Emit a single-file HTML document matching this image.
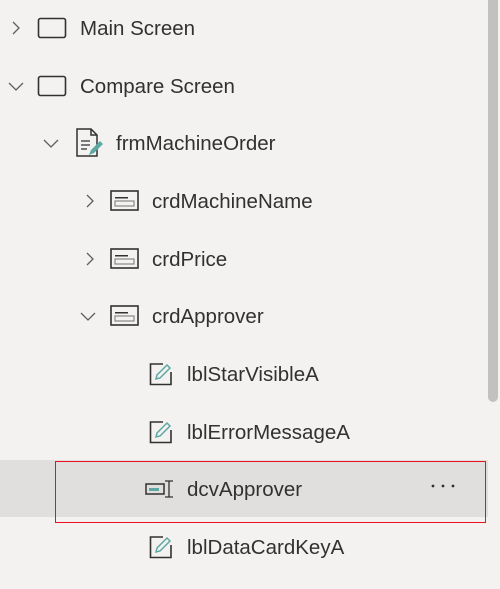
<!DOCTYPE html>
<html><head><style>
*{margin:0;padding:0;box-sizing:border-box}
body{width:500px;height:589px;background:#f3f2f1;position:relative;overflow:hidden;font-family:"Liberation Sans",sans-serif;color:#323130}
.t{position:absolute;font-size:20.5px;line-height:58px;top:0}
svg{position:absolute}
</style></head><body>
<div style="position:absolute;left:0;top:460px;width:488px;height:57px;background:#e1dfdd"></div>
<div style="position:absolute;left:55px;top:461px;width:431px;height:62px;border:1px solid #e81123;z-index:5"></div>
<div style="position:absolute;left:488px;top:0;width:10px;height:402px;background:#c2c1c0;border-radius:0 0 5px 5px"></div>

<svg style="left:10px;top:20px" width="12" height="16"><path d="M3 2l6 6-6 6" fill="none" stroke="#605e5c" stroke-width="1.3"/></svg>
<svg style="left:37px;top:17px" width="30" height="22"><rect x="1.5" y="1.5" width="27" height="19" rx="2" fill="none" stroke="#323130" stroke-width="1.6"/></svg>
<div class="t" style="left:80px;top:0px">Main Screen</div>

<svg style="left:7px;top:80px" width="18" height="12"><path d="M2 3l7 7 7-7" fill="none" stroke="#605e5c" stroke-width="1.3"/></svg>
<svg style="left:37px;top:75px" width="30" height="22"><rect x="1.5" y="1.5" width="27" height="19" rx="2" fill="none" stroke="#323130" stroke-width="1.6"/></svg>
<div class="t" style="left:80px;top:58px">Compare Screen</div>

<svg style="left:42px;top:137px" width="18" height="12"><path d="M2 3l7 7 7-7" fill="none" stroke="#605e5c" stroke-width="1.3"/></svg>
<svg style="left:75px;top:128px" width="30" height="30"><path d="M2 1h14l6 6v21H2z M16 1v6h6" fill="none" stroke="#323130" stroke-width="1.5"/><path d="M6 13h9M6 17h9M6 21h6" stroke="#323130" stroke-width="1.3"/><path d="M14 27l2-5 9-9 3 3-9 9z" fill="#5ea8a3"/></svg>
<div class="t" style="left:116px;top:115px">frmMachineOrder</div>

<svg style="left:84px;top:193px" width="12" height="16"><path d="M3 2l6 6-6 6" fill="none" stroke="#605e5c" stroke-width="1.3"/></svg>
<svg style="left:110px;top:190px" width="30" height="22"><rect x="1" y="1" width="27" height="19" fill="none" stroke="#323130" stroke-width="1.6"/><rect x="5" y="7" width="13" height="1.5" fill="#323130"/><rect x="5" y="11" width="19" height="5" fill="none" stroke="#8a8886" stroke-width="1.2"/></svg>
<div class="t" style="left:152px;top:173px">crdMachineName</div>
<svg style="left:84px;top:251px" width="12" height="16"><path d="M3 2l6 6-6 6" fill="none" stroke="#605e5c" stroke-width="1.3"/></svg>
<svg style="left:110px;top:248px" width="30" height="22"><rect x="1" y="1" width="27" height="19" fill="none" stroke="#323130" stroke-width="1.6"/><rect x="5" y="7" width="13" height="1.5" fill="#323130"/><rect x="5" y="11" width="19" height="5" fill="none" stroke="#8a8886" stroke-width="1.2"/></svg>
<div class="t" style="left:152px;top:231px">crdPrice</div>
<svg style="left:79px;top:310px" width="18" height="12"><path d="M2 3l7 7 7-7" fill="none" stroke="#605e5c" stroke-width="1.3"/></svg>
<svg style="left:110px;top:305px" width="30" height="22"><rect x="1" y="1" width="27" height="19" fill="none" stroke="#323130" stroke-width="1.6"/><rect x="5" y="7" width="13" height="1.5" fill="#323130"/><rect x="5" y="11" width="19" height="5" fill="none" stroke="#8a8886" stroke-width="1.2"/></svg>
<div class="t" style="left:152px;top:288px">crdApprover</div>

<svg style="left:149px;top:362px" width="26" height="24"><path d="M14 2H1.5v20.5h20.5V10" fill="none" stroke="#323130" stroke-width="1.6"/><path d="M7 17l1-4 10-10 3 3-10 10z" fill="none" stroke="#5ea8a3" stroke-width="1.5"/></svg>
<div class="t" style="left:187px;top:346px">lblStarVisibleA</div>
<svg style="left:149px;top:420px" width="26" height="24"><path d="M14 2H1.5v20.5h20.5V10" fill="none" stroke="#323130" stroke-width="1.6"/><path d="M7 17l1-4 10-10 3 3-10 10z" fill="none" stroke="#5ea8a3" stroke-width="1.5"/></svg>
<div class="t" style="left:187px;top:404px">lblErrorMessageA</div>
<svg style="left:145px;top:479px" width="32" height="22"><rect x="1" y="5" width="18" height="10" fill="none" stroke="#323130" stroke-width="1.5"/><rect x="4" y="9" width="10" height="3" fill="#5ea8a3"/><path d="M20 2h4v16h-4M28 2h-4M28 18h-4" fill="none" stroke="#323130" stroke-width="1.3"/></svg>
<div class="t" style="left:187px;top:461px">dcvApprover</div>
<svg style="left:430px;top:482px" width="30" height="8"><circle cx="3" cy="4" r="1.4" fill="#323130"/><circle cx="13" cy="4" r="1.4" fill="#323130"/><circle cx="23" cy="4" r="1.4" fill="#323130"/></svg>
<svg style="left:149px;top:535px" width="26" height="24"><path d="M14 2H1.5v20.5h20.5V10" fill="none" stroke="#323130" stroke-width="1.6"/><path d="M7 17l1-4 10-10 3 3-10 10z" fill="none" stroke="#5ea8a3" stroke-width="1.5"/></svg>
<div class="t" style="left:187px;top:519px">lblDataCardKeyA</div>
</body></html>
